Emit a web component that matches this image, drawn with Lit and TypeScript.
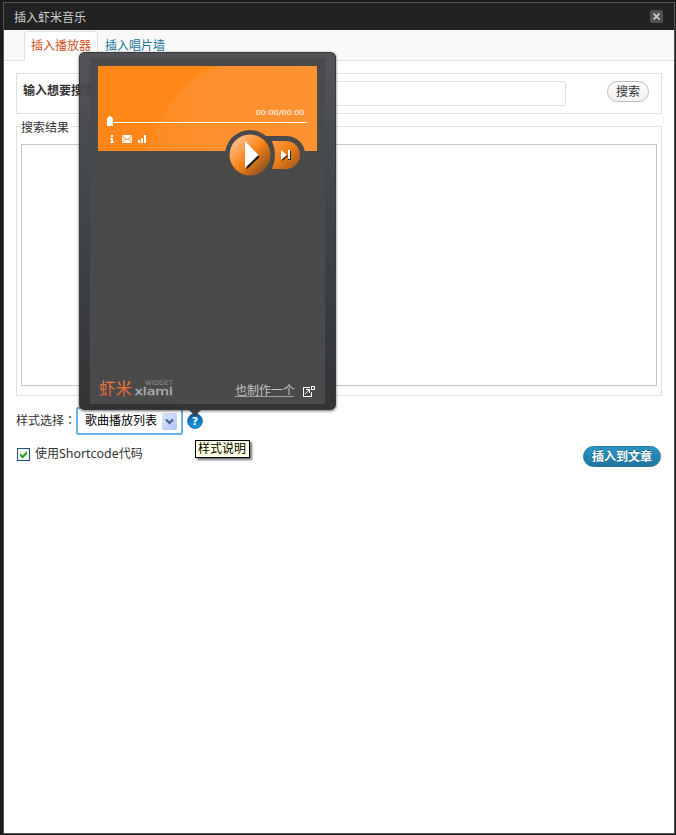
import { LitElement, html, css } from "lit";
import { customElement } from "lit/decorators.js";

@customElement("xiami-player")
class XiamiPlayer extends LitElement {
  static styles = css`
    :host {
      display: block;
      box-sizing: border-box;
      width: 257px;
      height: 358px;
      border: 1px solid #393a3c;
      border-radius: 5px;
      background: linear-gradient(rgba(74, 75, 79, 0.95), rgba(58, 62, 66, 0.95) 35%, rgba(42, 44, 46, 0.96));
      box-shadow: 0 1px 3px rgba(0, 0, 0, 0.6);
      padding: 5px 10px;
    }
    .body {
      box-sizing: border-box;
      height: 346px;
      padding: 8px 8px 0;
      background: #4a4a4a;
      display: flex;
      flex-direction: column;
      justify-content: space-between;
    }
    svg {
      display: block;
    }
  `;

  render() {
    return html`<div class="body">
      <svg width="219" height="112" viewBox="0 0 219 112">
        <defs>
          <linearGradient id="hill" x1="0" y1="0" x2="1" y2="0">
            <stop offset="0" stop-color="#fe8b22" />
            <stop offset=".4" stop-color="#fe902e" />
            <stop offset="1" stop-color="#fe9130" />
          </linearGradient>
          <linearGradient id="ball" x1=".1" y1=".1" x2=".9" y2=".9">
            <stop offset="0" stop-color="#ffc394" />
            <stop offset=".5" stop-color="#f98316" />
            <stop offset="1" stop-color="#875020" />
          </linearGradient>
          <linearGradient id="pill" x1="0" y1="0" x2="1" y2="1">
            <stop offset="0" stop-color="#ff9b43" />
            <stop offset=".45" stop-color="#ee7f18" />
            <stop offset="1" stop-color="#95561d" />
          </linearGradient>
        </defs>
        <rect width="219" height="85" fill="#ff8718" />
        <path d="M50 85C58 61 66 43 82 26C94 12 104 4 125 0H219V85Z" fill="url(#hill)" />
        <g shape-rendering="crispEdges" fill="#fff">
          <rect x="9" y="56" width="200" height="1" />
          <path d="M9 52h1v-1h1v-1h2v1h1v1h1v8h-6z" />
          <path d="M13 69h2v2h-2zM12 72h3v4h1v1h-4v-1h1v-3h-1z" />
          <rect x="24" y="69" width="10" height="8" />
          <path d="M40 74h2v3h-2zM43 72h2v5h-2zM46 69h2v8h-2z" />
        </g>
        <path d="M24 69.5L29 74L34 69.5M24 76.5L27.5 73M34 76.5L30.500 73" fill="none" stroke="#ff8718" stroke-width="1" />
        <text x="157.500" y="48.500" textLength="49" lengthAdjust="spacingAndGlyphs" font-family="'DejaVu Sans',sans-serif" font-size="7" fill="#fff">00:00/00:00</text>
        <path d="M165 70H188A19 18 0 0 1 207 88A19 17 0 0 1 188 105H165Z" fill="#4a4a4a" />
        <circle cx="152" cy="89" r="25" fill="#4a4a4a" />
        <path d="M174 75H188A14 14 0 0 1 188 103H174Q180 89 174 75Z" fill="url(#pill)" />
        <circle cx="152" cy="89" r="20.500" fill="url(#ball)" />
        <path d="M148.500 77.500L161.500 91L148.500 103.500Z" fill="#151515" />
        <path d="M147 75V102L160.500 89Z" fill="#fff" />
        <path d="M184 85L190 90L184 95ZM190 85h3v9h-3z" fill="#3b281a" />
        <path d="M183 84V94L189 89ZM190 84h2v9h-2z" fill="#fff" />
      </svg>
      <svg width="219" height="29" viewBox="0 0 219 29">
        <defs>
          <linearGradient id="mark" x1="0" y1="0" x2="0" y2="1">
            <stop offset="0" stop-color="#ff8b32" />
            <stop offset="1" stop-color="#cb5740" />
          </linearGradient>
        </defs>
        <text x="1" y="19.500" font-family="'Noto Sans CJK SC',sans-serif" font-size="16.500" textLength="33" fill="url(#mark)">虾米</text>
        <text x="36.500" y="20" font-family="'DejaVu Sans',sans-serif" font-size="10" textLength="38.500" lengthAdjust="spacingAndGlyphs" fill="#b0b0b0" stroke="#b0b0b0" stroke-width=".3">xiami</text>
        <text x="47" y="10" font-family="'DejaVu Sans',sans-serif" font-size="6.500" textLength="28" lengthAdjust="spacingAndGlyphs" fill="#8b8b8b">WIDGET</text>
        <text x="137" y="19.500" font-family="'Noto Sans CJK SC',sans-serif" font-size="12" textLength="60" fill="#c2c2c2">也制作一个</text>
        <path d="M137 21.500h59" stroke="#a0a0a0" />
        <g fill="#fff" shape-rendering="crispEdges">
          <path d="M205 12h7v1h-6v8h7v-4h1v5h-9z" />
          <path fill-rule="evenodd" d="M213 11h4v4h-4zM214 12v2h2v-2z" />
          <path d="M208 14h4v4h-1v-2h-1v1h-1v1h-1v1h-1v-1h1v-1h1v-1h1v-1h-2z" />
        </g>
      </svg>
    </div>`;
  }
}

@customElement("app-root")
class AppRoot extends LitElement {
  static styles = css`
    :host {
      display: block;
      box-sizing: border-box;
      width: 676px;
      height: 835px;
      padding: 2px 1px 1px 3px;
      background: #1c1b1a;
      overflow: hidden;
      font: 12px/16px "Liberation Sans", "Noto Sans CJK SC", sans-serif;
      color: #333;
    }
    * {
      box-sizing: border-box;
    }
    .window {
      position: relative;
      height: 832px;
      width: 672px;
      border: 1px solid #555;
      background: #fff;
    }
    .title {
      height: 27px;
      padding: 0 11px 0 10px;
      background: #222;
      color: #cfcfcf;
      display: flex;
      align-items: center;
      justify-content: space-between;
    }
    .title span {
      padding-top: 2px;
    }
    .close {
      display: block;
    }
    .tabs {
      height: 31px;
      padding: 1px 0 0 20px;
      border-bottom: 1px solid #dfdfdf;
      background: #f9f9f9;
      display: flex;
    }
    .tab {
      height: 30px;
      padding: 6px 6px 0;
      border: 1px solid transparent;
      color: #21759b;
      white-space: nowrap;
    }
    .tab.on {
      width: 74px;
      border-color: #dfdfdf;
      border-bottom: 0;
      border-radius: 4px 4px 0 0;
      background: #fff;
      color: #d54e21;
    }
    .content {
      padding: 12px 11px 0 12px;
    }
    .search {
      width: 646px;
      height: 41px;
      border: 1px solid #dfdfdf;
      padding: 7px 12px 0 6px;
      display: flex;
      align-items: flex-start;
    }
    .search b {
      width: 126px;
      padding-top: 2px;
      white-space: nowrap;
      overflow: hidden;
    }
    .field {
      width: 417px;
      height: 25px;
      border: 1px solid #dfdfdf;
      border-radius: 3px;
    }
    .find {
      margin: 0 0 0 auto;
      width: 42px;
      height: 21px;
      border: 1px solid #bbb;
      border-radius: 11px;
      background: linear-gradient(#fff, #f2f2f2);
      text-align: center;
      line-height: 21px;
    }
    .results {
      width: 646px;
      height: 270px;
      margin-top: 12px;
      padding: 0 4px;
      border: 1px solid #dfdfdf;
    }
    .legend {
      display: block;
      width: 50px;
      height: 17px;
      margin: -7px 0 7px 0;
      background: #fff;
      white-space: nowrap;
    }
    .list {
      height: 242px;
      border: 1px solid #c6c6c6;
    }
    .style {
      height: 28px;
      margin-top: 11px;
      display: flex;
      align-items: center;
    }
    .style label {
      width: 60px;
      white-space: nowrap;
    }
    .colon {
      font-family: "Noto Sans CJK TC", sans-serif;
      line-height: 1;
    }
    .select {
      width: 107px;
      height: 28px;
      padding: 0 4px 0 7px;
      border: 2px solid #67b2ea;
      border-radius: 2px;
      color: #000;
      display: flex;
      align-items: center;
      justify-content: space-between;
    }
    .help {
      margin-left: 4px;
    }
    .foot {
      margin-top: 11px;
      display: flex;
      align-items: flex-start;
    }
    .check {
      margin: 2px 5px 0 1px;
    }
    .latin {
      font-family: "Noto Sans", sans-serif;
      font-size: 12.4px;
      line-height: 1;
    }
    .insert {
      margin-left: auto;
      width: 78px;
      height: 21px;
      margin-right: 2px;
      border: 1px solid #21759b;
      border-radius: 11px;
      background: linear-gradient(#2a95c5, #21759b);
      color: #fff;
      font-weight: bold;
      text-align: center;
      line-height: 21px;
      text-shadow: 0 -1px 0 rgba(0, 0, 0, 0.3);
    }
    .popup {
      position: absolute;
      left: 75px;
      top: 49px;
    }
    .tip {
      position: absolute;
      left: 191px;
      top: 437px;
      width: 55px;
      height: 18px;
      border: 1px solid #000;
      background: #ffffe1;
      color: #000;
      padding-left: 2px;
      line-height: 16px;
      white-space: nowrap;
      box-shadow: 2px 2px 2px rgba(0, 0, 0, 0.55);
    }
    .arrow {
      position: absolute;
      left: 185px;
      top: 407px;
      width: 12px;
      height: 6px;
      background: #3c3c3e;
      clip-path: polygon(0 0, 100% 0, 50% 100%);
    }
  `;

  render() {
    return html`<div class="window">
      <div class="title">
        <span>插入虾米音乐</span>
        <svg class="close" width="13" height="13" viewBox="0 0 13 13">
          <rect width="13" height="13" rx="2" fill="#505050" />
          <path d="M3.500 3.500L9.500 9.500M9.500 3.500L3.500 9.500" stroke="#d5d5d5" stroke-width="1.700" />
        </svg>
      </div>
      <div class="tabs">
        <div class="tab on">插入播放器</div>
        <div class="tab">插入唱片墙</div>
      </div>
      <div class="content">
        <div class="search">
          <b>输入想要搜索的音乐</b>
          <div class="field"></div>
          <div class="find">搜索</div>
        </div>
        <div class="results">
          <span class="legend">搜索结果</span>
          <div class="list"></div>
        </div>
        <div class="style">
          <label>样式选择<span class="colon" lang="zh-TW">：</span></label>
          <div class="select">
            <span>歌曲播放列表</span>
            <svg width="15" height="17" viewBox="0 0 15 17">
              <defs>
                <linearGradient id="drop" x1="0" y1="0" x2="1" y2="1">
                  <stop offset="0" stop-color="#dce6fe" />
                  <stop offset="1" stop-color="#b0c6f6" />
                </linearGradient>
              </defs>
              <rect width="15" height="17" rx="1.500" fill="url(#drop)" />
              <path d="M4 6.500L7.500 10L11 6.500" fill="none" stroke="#4d6185" stroke-width="2.200" />
            </svg>
          </div>
          <svg class="help" width="16" height="16" viewBox="0 0 16 16">
            <defs>
              <linearGradient id="blue" x1="0" y1="0" x2="0" y2="1">
                <stop offset="0" stop-color="#085c9c" />
                <stop offset="1" stop-color="#18a0ec" />
              </linearGradient>
            </defs>
            <circle cx="8" cy="8" r="7.400" fill="url(#blue)" stroke="#17568a" stroke-width=".8" />
            <text x="8" y="12" text-anchor="middle" font-family="'DejaVu Sans',sans-serif" font-weight="bold" font-size="11" fill="#fff">?</text>
          </svg>
        </div>
        <div class="foot">
          <svg class="check" width="13" height="13" viewBox="0 0 13 13">
            <rect x=".5" y=".5" width="12" height="12" fill="#f5f5f2" stroke="#1d5180" />
            <path d="M3 5V8L5.500 10.500L10 6V3L5.500 7.500Z" fill="#21a121" />
          </svg>
          <span>使用<span class="latin">Shortcode</span>代码</span>
          <div class="insert">插入到文章</div>
        </div>
      </div>
      <xiami-player class="popup"></xiami-player>
      <div class="arrow"></div>
      <div class="tip">样式说明</div>
    </div>`;
  }
}
